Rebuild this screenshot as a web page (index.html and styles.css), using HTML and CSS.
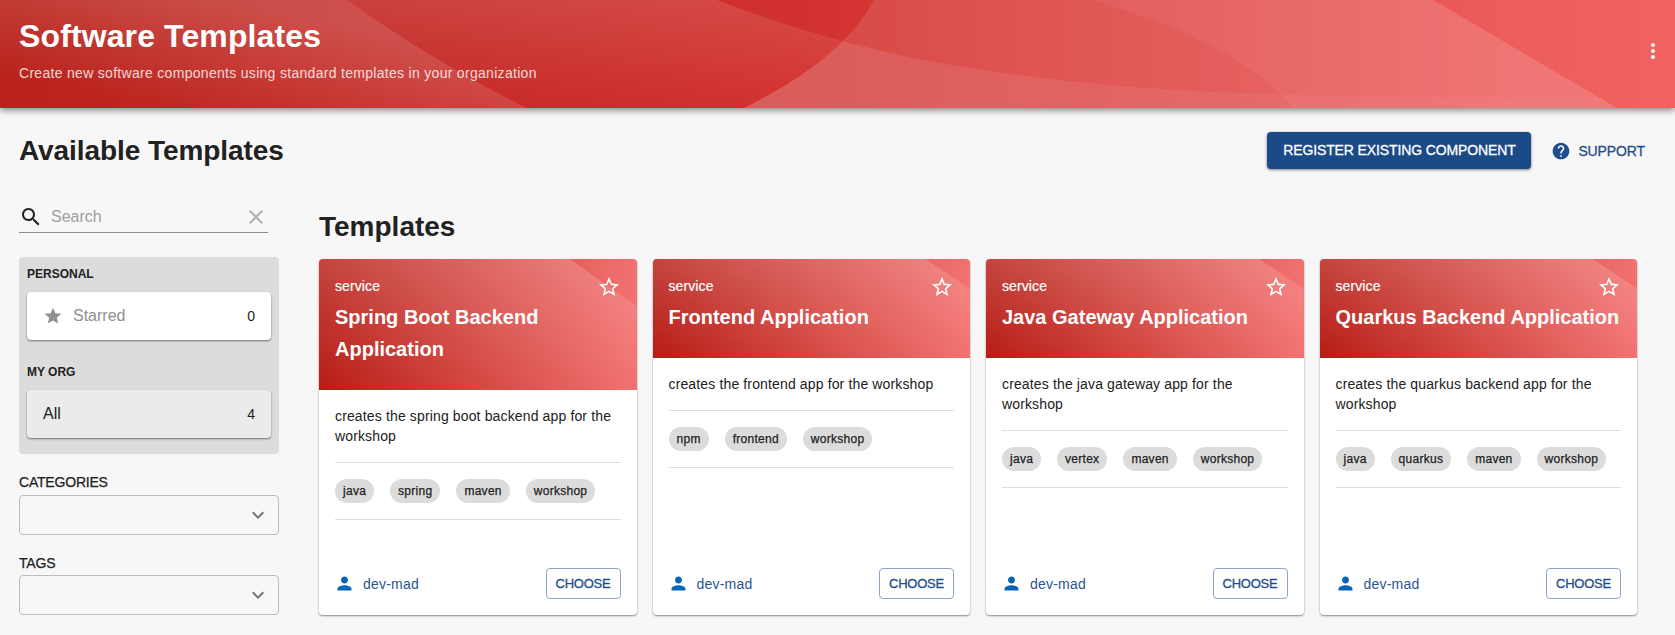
FILE: index.html
```html
<!DOCTYPE html>
<html lang="en">
<head>
<meta charset="utf-8">
<title>Software Templates</title>
<link rel="stylesheet" href="styles.css">
</head>
<body>
<svg class="sprite" aria-hidden="true">
  <symbol id="i-star" viewBox="0 0 24 24"><path d="M12 17.27 18.18 21l-1.64-7.03L22 9.24l-7.19-.61L12 2 9.19 8.63 2 9.24l5.46 4.73L5.82 21z"/></symbol>
  <symbol id="i-star-outline" viewBox="0 0 24 24"><path d="m22 9.24-7.19-.62L12 2 9.19 8.63 2 9.24l5.46 4.73L5.82 21 12 17.27 18.18 21l-1.63-7.03L22 9.24zM12 15.4l-3.76 2.27 1-4.28-3.32-2.88 4.38-.38L12 6.1l1.71 4.04 4.38.38-3.32 2.88 1 4.28L12 15.4z"/></symbol>
  <symbol id="i-person" viewBox="0 0 24 24"><path d="M12 12c2.21 0 4-1.79 4-4s-1.79-4-4-4-4 1.79-4 4 1.79 4 4 4zm0 2c-2.67 0-8 1.34-8 4v2h16v-2c0-2.66-5.33-4-8-4z"/></symbol>
  <symbol id="i-chevron" viewBox="0 0 24 24"><path d="M7.41 8.59 12 13.17l4.59-4.58L18 10l-6 6-6-6 1.41-1.41z"/></symbol>
</svg>

<header class="banner">
  <svg class="waves" viewBox="0 0 1675 108" preserveAspectRatio="none" aria-hidden="true">
    <defs>
      <linearGradient id="wa" gradientUnits="userSpaceOnUse" x1="200" y1="0" x2="180" y2="108"><stop offset="0" stop-color="#fff" stop-opacity=".19"/><stop offset="1" stop-color="#fff" stop-opacity=".03"/></linearGradient>
      <linearGradient id="wb" x1="0" y1="0" x2="0" y2="1"><stop offset="0" stop-color="#fff" stop-opacity=".12"/><stop offset="1" stop-color="#fff" stop-opacity="0"/></linearGradient>
      <linearGradient id="wd" x1="0" y1="0" x2="1" y2="0"><stop offset="0" stop-color="#fff" stop-opacity=".12"/><stop offset=".5" stop-color="#fff" stop-opacity=".06"/><stop offset="1" stop-color="#fff" stop-opacity=".02"/></linearGradient>
    </defs>
    <path fill="url(#wa)" d="M0 0H347Q437 64 527 108H0z"/>
    <path fill="url(#wb)" d="M347 0H717Q779 24 842 41Q808 76 744 108H527Q437 64 347 0z"/>
    <path fill="#fff" fill-opacity=".11" d="M874 0H1092Q1245 46 1292 108H744Q842 60 874 0z"/>
    <path fill="#fff" fill-opacity=".15" d="M1092 0H1433L1617 108H1292Q1245 46 1092 0z"/>
    <path fill="url(#wd)" d="M842 41Q955 72 1120 86Q1290 100 1598 97L1617 108H744Q808 76 842 41z"/>
  </svg>
  <div class="banner-text">
    <h1>Software Templates</h1>
    <p>Create new software components using standard templates in your organization</p>
  </div>
  <svg class="kebab" viewBox="0 0 24 24"><path d="M12 8c1.1 0 2-.9 2-2s-.9-2-2-2-2 .9-2 2 .9 2 2 2zm0 2c-1.1 0-2 .9-2 2s.9 2 2 2 2-.9 2-2-.9-2-2-2zm0 6c-1.1 0-2 .9-2 2s.9 2 2 2 2-.9 2-2-.9-2-2-2z"/></svg>
</header>

<div class="toolbar">
  <h2>Available Templates</h2>
  <a class="register">REGISTER EXISTING COMPONENT</a>
  <a class="support"><svg viewBox="0 0 24 24"><path d="M12 2C6.48 2 2 6.48 2 12s4.48 10 10 10 10-4.48 10-10S17.52 2 12 2zm1 17h-2v-2h2v2zm2.07-7.75-.9.92C13.45 12.9 13 13.5 13 15h-2v-.5c0-1.1.45-2.1 1.17-2.83l1.24-1.26c.37-.36.59-.86.59-1.41 0-1.1-.9-2-2-2s-2 .9-2 2H8c0-2.21 1.79-4 4-4s4 1.79 4 4c0 .88-.36 1.68-.93 2.25z"/></svg><span>SUPPORT</span></a>
</div>

<div class="layout">
  <aside class="sidebar">
    <div class="search">
      <svg viewBox="0 0 24 24"><path d="M15.5 14h-.79l-.28-.27C15.41 12.59 16 11.11 16 9.5 16 5.91 13.09 3 9.5 3S3 5.91 3 9.5 5.91 16 9.5 16c1.61 0 3.09-.59 4.23-1.57l.27.28v.79l5 4.99L20.49 19l-4.99-5zm-6 0C7.01 14 5 11.99 5 9.5S7.01 5 9.5 5 14 7.01 14 9.5 11.99 14 9.5 14z"/></svg>
      <span class="placeholder">Search</span>
      <svg class="clear" viewBox="0 0 24 24"><path d="M19 6.41 17.59 5 12 10.59 6.41 5 5 6.41 10.59 12 5 17.59 6.41 19 12 13.41 17.59 19 19 17.59 13.41 12z"/></svg>
    </div>
    <div class="groups">
      <h3>PERSONAL</h3>
      <div class="group-item starred"><svg><use href="#i-star"/></svg><span class="name">Starred</span><span class="count">0</span></div>
      <h3 class="second">MY ORG</h3>
      <div class="group-item selected"><span class="name">All</span><span class="count">4</span></div>
    </div>
    <label class="cat">CATEGORIES</label>
    <div class="select"><svg><use href="#i-chevron"/></svg></div>
    <label class="tag-label">TAGS</label>
    <div class="select"><svg><use href="#i-chevron"/></svg></div>
  </aside>

  <main class="content">
    <h2>Templates</h2>
    <div class="cards">
      <article class="card">
        <div class="card-head tall"><svg><use href="#i-star-outline"/></svg><p>service</p><h4>Spring Boot Backend Application</h4></div>
        <div class="card-body"><p>creates the spring boot backend app for the workshop</p>
          <div class="tags"><span>java</span><span>spring</span><span>maven</span><span>workshop</span></div></div>
        <div class="card-foot"><svg><use href="#i-person"/></svg><a class="owner">dev-mad</a><a class="choose">CHOOSE</a></div>
      </article>
      <article class="card">
        <div class="card-head"><svg><use href="#i-star-outline"/></svg><p>service</p><h4>Frontend Application</h4></div>
        <div class="card-body"><p>creates the frontend app for the workshop</p>
          <div class="tags"><span>npm</span><span>frontend</span><span>workshop</span></div></div>
        <div class="card-foot"><svg><use href="#i-person"/></svg><a class="owner">dev-mad</a><a class="choose">CHOOSE</a></div>
      </article>
      <article class="card">
        <div class="card-head"><svg><use href="#i-star-outline"/></svg><p>service</p><h4>Java Gateway Application</h4></div>
        <div class="card-body"><p>creates the java gateway app for the workshop</p>
          <div class="tags"><span>java</span><span>vertex</span><span>maven</span><span>workshop</span></div></div>
        <div class="card-foot"><svg><use href="#i-person"/></svg><a class="owner">dev-mad</a><a class="choose">CHOOSE</a></div>
      </article>
      <article class="card">
        <div class="card-head"><svg><use href="#i-star-outline"/></svg><p>service</p><h4>Quarkus Backend Application</h4></div>
        <div class="card-body"><p>creates the quarkus backend app for the workshop</p>
          <div class="tags"><span>java</span><span>quarkus</span><span>maven</span><span>workshop</span></div></div>
        <div class="card-foot"><svg><use href="#i-person"/></svg><a class="owner">dev-mad</a><a class="choose">CHOOSE</a></div>
      </article>
    </div>
  </main>
</div>
</body>
</html>
```

FILE: styles.css
```css
* { box-sizing: border-box; margin: 0; padding: 0; }
body {
  background: #f7f7f7;
  color: #212121;
  font: 14px/20px "Liberation Sans", Arial, sans-serif;
  height: 635px;
  overflow: hidden;
}
svg { display: block; flex: none; fill: currentColor; }
.sprite { position: absolute; width: 0; height: 0; }

/* Banner */
.banner {
  position: relative;
  display: flex;
  justify-content: space-between;
  height: 108px;
  padding: 16px 10px 0 19px;
  color: #fff;
  background: linear-gradient(90deg, #b71c14 0, #c82b28 31%, #d2322f 48%, #ec5d5b 90%, #f06360 100%);
  box-shadow: 0 2px 7px rgba(0, 0, 0, .5);
}
.waves { position: absolute; inset: 0; width: 100%; height: 100%; }
.banner-text { position: relative; }
.banner h1 { font-size: 32px; line-height: 40px; letter-spacing: .12px; }
.banner p { margin-top: 7px; opacity: .8; letter-spacing: .3px; }
.kebab { position: relative; width: 24px; height: 24px; margin-top: 23px; }

/* Page title row */
.toolbar { display: flex; align-items: center; height: 37px; margin-top: 24px; padding: 0 30px 0 19px; }
h2 { font-size: 28px; line-height: 36px; }
.toolbar h2 { flex: 1; letter-spacing: -.07px; }
.register {
  width: 264px;
  height: 37px;
  border-radius: 4px;
  background: #1b4b86;
  color: #fff;
  line-height: 36px;
  text-align: center;
  box-shadow: 0 1px 3px rgba(0, 0, 0, .5);
}
.register, .support { white-space: nowrap; letter-spacing: -.12px; -webkit-text-stroke: .3px currentColor; }
.support { display: flex; align-items: center; gap: 7px; margin-left: 20px; color: #1f4e8c; }
.support svg { width: 20px; height: 20px; }

.layout { display: flex; padding: 0 38px 0 19px; }

/* Filters */
.sidebar { width: 260px; margin-right: 40px; padding-top: 31px; }
.search { display: flex; align-items: center; width: 249px; height: 33px; padding-top: 2px; border-bottom: 1px solid #8c8c8c; }
.search svg { width: 24px; height: 24px; }
.placeholder { flex: 1; margin-left: 8px; font-size: 16px; color: #9f9f9f; }
.search .clear { color: #b0b0b0; }
.groups { height: 197px; margin-top: 24px; padding: 8px; border-radius: 4px; background: #dcdcdc; }
.groups h3 { font-size: 12px; line-height: 18px; }
.groups .second { margin-top: 23px; }
.group-item {
  display: flex;
  align-items: center;
  height: 48px;
  margin-top: 9px;
  padding: 0 16px;
  border-radius: 4px;
  background: #fff;
  box-shadow: 0 1px 2px rgba(0, 0, 0, .5);
}
.group-item.selected { background: #ebebeb; }
.group-item svg { width: 20px; height: 20px; margin-right: 10px; }
.group-item .name { flex: 1; font-size: 16px; }
.starred .name, .starred svg { color: #8f8f8f; }
label { display: block; line-height: 20px; letter-spacing: -.2px; -webkit-text-stroke: .25px currentColor; }
.cat { margin-top: 18px; }
.tag-label { margin-top: 18px; }
.select {
  display: flex;
  align-items: center;
  justify-content: flex-end;
  height: 40px;
  margin-top: 3px;
  padding-right: 8px;
  border: 1px solid #bdbdbd;
  border-radius: 4px;
  color: #757575;
}
.tag-label + .select { margin-top: 2px; }
.select svg { width: 24px; height: 24px; }

/* Template cards */
.content { flex: 1; padding-top: 40px; }
.cards { display: grid; grid-template-columns: repeat(4, 1fr); gap: 16px; margin-top: 14px; }
.card {
  display: flex;
  flex-direction: column;
  height: 356px;
  border-radius: 4px;
  background: #fff;
  overflow: hidden;
  box-shadow: 0 1px 2px rgba(0, 0, 0, .45);
}
.card-head {
  --x: 86%;
  --y: 30%;
  position: relative;
  padding: 16px 16px 25px;
  color: #fff;
  background: linear-gradient(90deg, #b71c14, #f27270);
}
.card-head.tall { --x: 79%; --y: 36%; }
.card-head::before {
  content: "";
  position: absolute;
  inset: 0;
  background: linear-gradient(180deg, rgba(255, 255, 255, .18), rgba(255, 255, 255, 0));
  clip-path: polygon(0 0, var(--x) 0, 100% var(--y), 100% 100%, 0 100%);
}
.card-head svg { position: absolute; top: 16px; right: 16px; width: 24px; height: 24px; }
.card-head p { position: relative; line-height: 22px; letter-spacing: .1px; -webkit-text-stroke: .2px currentColor; }
.card-head h4 { position: relative; margin-top: 4px; font-size: 20px; line-height: 32px; }
.card-body { padding: 16px; }
.card-body p { letter-spacing: .14px; }
.tags { display: flex; gap: 16px; margin-top: 16px; padding: 16px 0; border: solid #dedede; border-width: 1px 0; }
.tags span {
  height: 24px;
  padding: 0 8px;
  border-radius: 12px;
  background: #dcdcdc;
  font-size: 12px;
  line-height: 24px;
  letter-spacing: .27px;
  -webkit-text-stroke: .25px currentColor;
}
.card-foot { display: flex; align-items: center; margin-top: auto; padding: 0 16px 16px; color: #2a5592; }
.card-foot svg { width: 21px; height: 21px; margin-left: -1px; margin-right: 8px; color: #0566b8; }
.owner { flex: 1; letter-spacing: .2px; }
.choose {
  width: 75px;
  height: 31px;
  border: 1px solid #8da5c6;
  border-radius: 4px;
  color: #1f4e8c;
  font-size: 13px;
  line-height: 29px;
  letter-spacing: -.25px;
  text-align: center;
  -webkit-text-stroke: .3px currentColor;
}
```
